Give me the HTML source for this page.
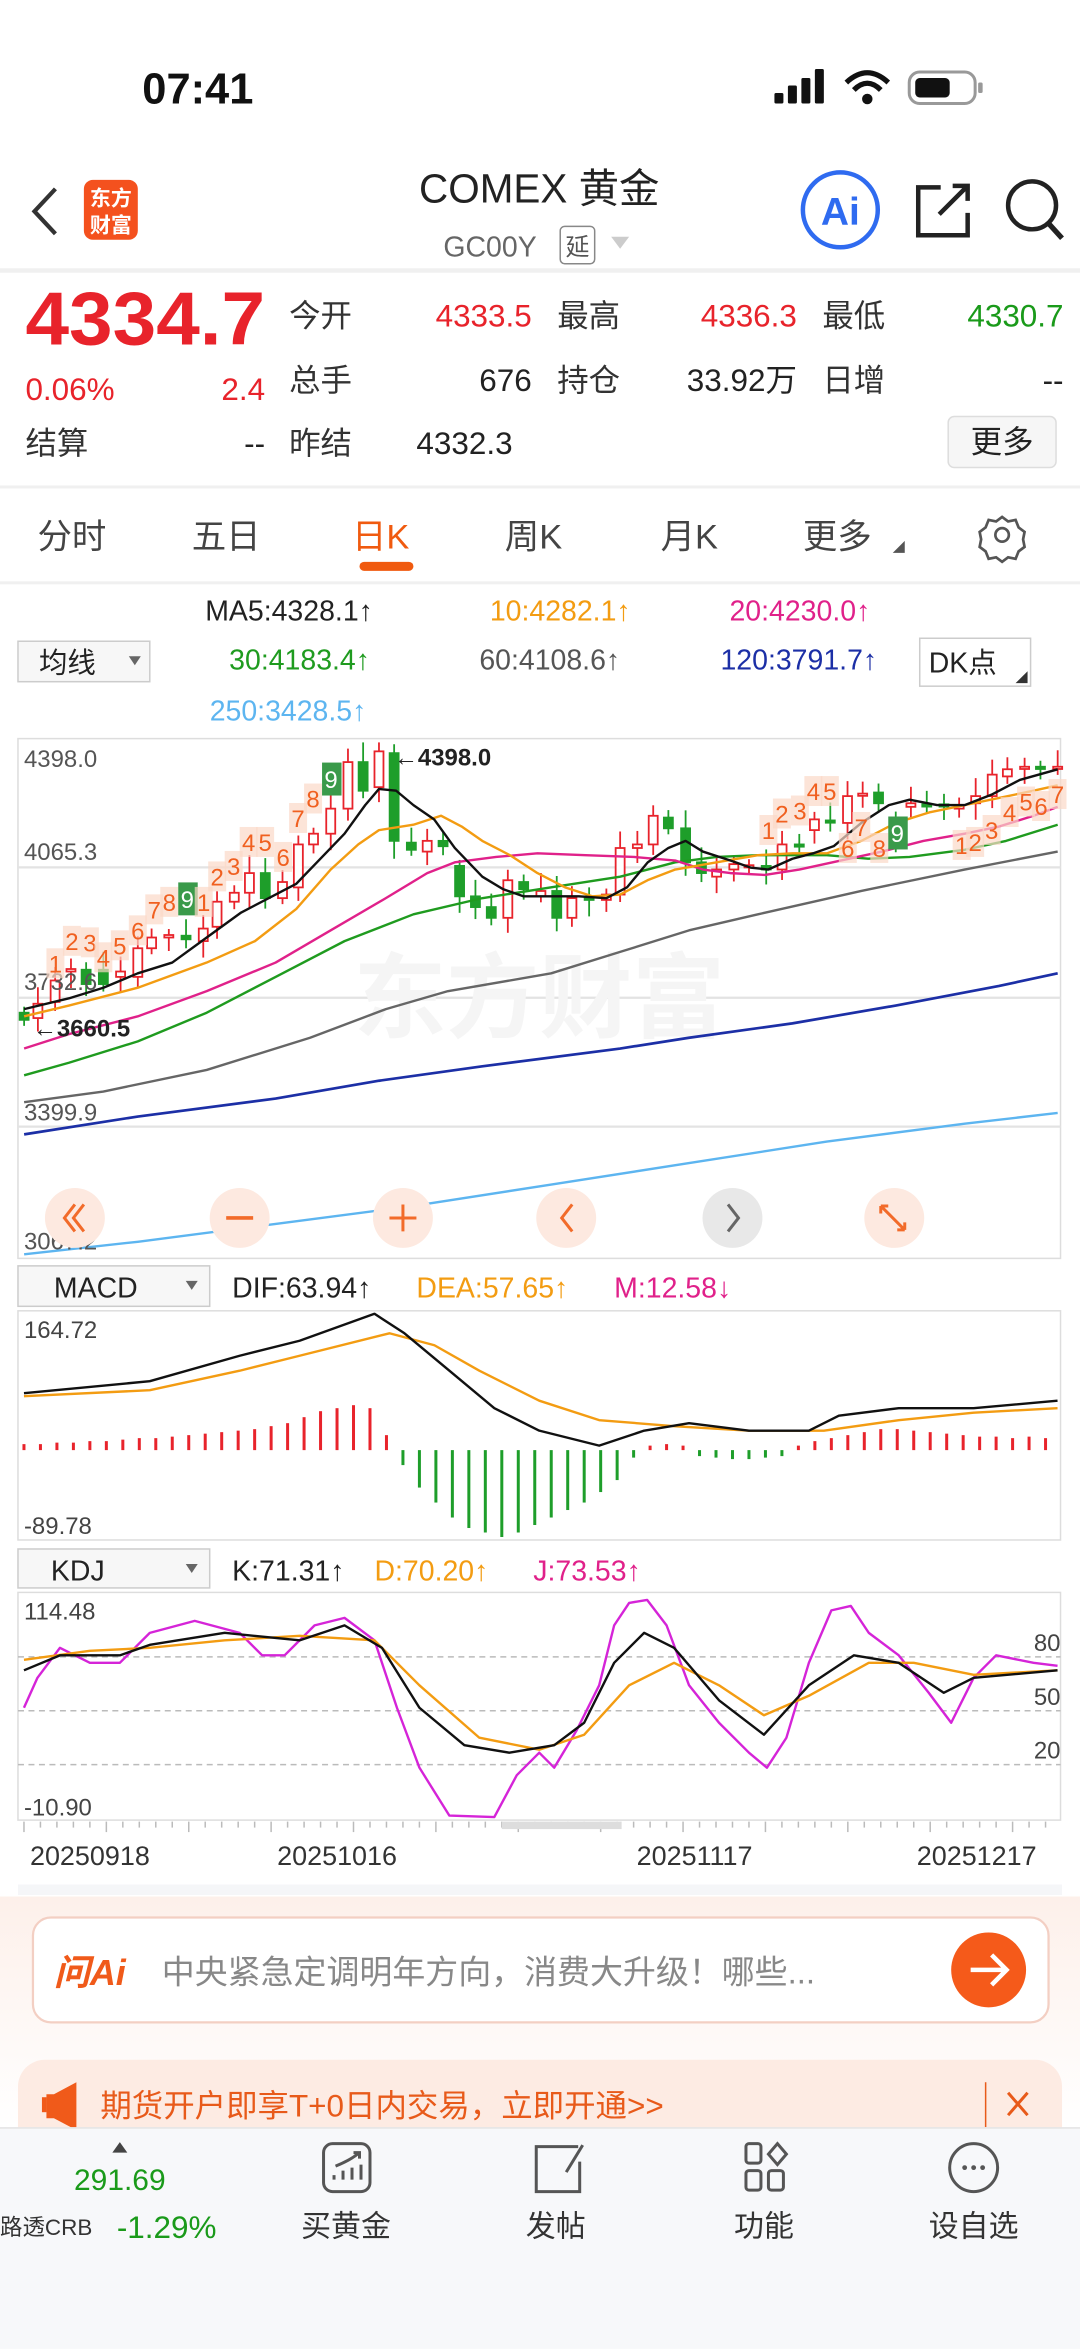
<!DOCTYPE html>
<html><head><meta charset="utf-8"><style>
html,body{margin:0;padding:0;background:#fff;}
svg{display:block;}
text{font-family:"Liberation Sans","Noto Sans CJK SC",sans-serif;}
</style></head><body>
<svg id="s" width="1080" height="2349" viewBox="0 0 721 1568" xmlns="http://www.w3.org/2000/svg">
<rect width="721" height="1568" fill="#fff"/>
<!-- status bar -->
<text x="95" y="69" font-size="29" font-weight="bold" fill="#111">07:41</text>
<rect x="517" y="62" width="6" height="7" rx="1" fill="#111"/><rect x="526" y="57" width="6" height="12" rx="1" fill="#111"/><rect x="535" y="52" width="6" height="17" rx="1" fill="#111"/><rect x="544" y="46" width="6" height="23" rx="1" fill="#111"/>
<path d="M565 55 Q579 42 593 55" stroke="#111" stroke-width="3.5" fill="none"/><path d="M570 60 Q579 51 588 60" stroke="#111" stroke-width="3.5" fill="none"/><circle cx="579" cy="66" r="3.5" fill="#111"/>
<rect x="607" y="48" width="44" height="21" rx="7" stroke="#999" stroke-width="2" fill="none"/><rect x="611" y="52" width="23" height="13" rx="3" fill="#111"/><rect x="653" y="55" width="3" height="7" rx="1" fill="#999"/>
<!-- header -->
<path d="M37 126 L23 141 L37 156" stroke="#333" stroke-width="2.8" fill="none"/>
<rect x="56" y="120" width="36" height="40" rx="6" fill="#f4511e"/>
<text x="74" y="137" font-size="14" font-weight="bold" fill="#fff" text-anchor="middle">东方</text>
<text x="74" y="155" font-size="14" font-weight="bold" fill="#fff" text-anchor="middle">财富</text>
<text x="360" y="135" font-size="27" fill="#222" text-anchor="middle">COMEX 黄金</text>
<text x="296" y="171" font-size="19" fill="#666">GC00Y</text>
<rect x="374" y="151" width="23" height="25" rx="3" stroke="#888" fill="none"/><text x="385.5" y="170" font-size="16" fill="#555" text-anchor="middle">延</text>
<path d="M408 158 L420 158 L414 166Z" fill="#ccc"/>
<circle cx="561" cy="140" r="25" stroke="#2f6bf0" stroke-width="3" fill="none"/>
<text x="561" y="150" font-size="26" font-weight="bold" fill="#2f6bf0" text-anchor="middle">Ai</text>
<path d="M628 125 L613 125 L613 157 L646 157 L646 142" stroke="#222" stroke-width="3" fill="none"/><path d="M627 143 L646 124 M636 124 L646 124 L646 134" stroke="#222" stroke-width="3" fill="none"/>
<circle cx="689" cy="137" r="16" stroke="#222" stroke-width="3" fill="none"/><path d="M700 149 L709 159" stroke="#222" stroke-width="3.5"/>
<rect x="0" y="179" width="721" height="3" fill="#f0f0f0"/>
<!-- quote -->
<text x="17" y="230" font-size="50" font-weight="bold" fill="#e8232b" textLength="160" lengthAdjust="spacingAndGlyphs">4334.7</text>
<g font-size="21">
<text x="193" y="218" fill="#333">今开</text><text x="355" y="218" fill="#e8232b" text-anchor="end">4333.5</text>
<text x="372" y="218" fill="#333">最高</text><text x="532" y="218" fill="#e8232b" text-anchor="end">4336.3</text>
<text x="549" y="218" fill="#333">最低</text><text x="710" y="218" fill="#1a9a1a" text-anchor="end">4330.7</text>
<text x="17" y="267" fill="#e8232b">0.06%</text><text x="177" y="267" fill="#e8232b" text-anchor="end">2.4</text>
<text x="193" y="261" fill="#333">总手</text><text x="355" y="261" fill="#222" text-anchor="end">676</text>
<text x="372" y="261" fill="#333">持仓</text><text x="532" y="261" fill="#222" text-anchor="end">33.92万</text>
<text x="549" y="261" fill="#333">日增</text><text x="710" y="261" fill="#222" text-anchor="end">--</text>
<text x="17" y="303" fill="#333">结算</text><text x="177" y="303" fill="#222" text-anchor="end">--</text>
<text x="193" y="303" fill="#333">昨结</text><text x="278" y="303" fill="#222">4332.3</text>
</g>
<rect x="633" y="278" width="72" height="34" rx="4" fill="#f6f6f6" stroke="#ddd"/>
<text x="669" y="302" font-size="21" fill="#222" text-anchor="middle">更多</text>
<rect x="0" y="324" width="721" height="2" fill="#f0f0f0"/>
<!-- tabs -->
<g font-size="23" fill="#444">
<text x="25" y="366">分时</text><text x="128" y="366">五日</text>
<text x="235" y="366" fill="#f05a0f">日K</text>
<text x="337" y="366">周K</text><text x="441" y="366">月K</text><text x="536" y="366">更多</text>
</g>
<path d="M596 369 L604 361 L604 369Z" fill="#555"/>
<path d="M669 345 l4 3 5 -1 2 5 4 3 -1 5 1 5 -4 3 -2 5 -5 -1 -4 3 -4 -3 -5 1 -2 -5 -4 -3 1 -5 -1 -5 4 -3 2 -5 5 1z" stroke="#555" stroke-width="1.8" fill="none"/>
<circle cx="669" cy="357" r="4.5" stroke="#555" stroke-width="1.8" fill="none"/>
<rect x="240" y="375" width="36" height="6" rx="3" fill="#f05a0f"/>
<rect x="0" y="388" width="721" height="2" fill="#f0f0f0"/>
<!-- MA legend -->
<g font-size="19">
<text x="137" y="414" fill="#222">MA5:4328.1↑</text><text x="327" y="414" fill="#f39c12">10:4282.1↑</text><text x="487" y="414" fill="#e0218a">20:4230.0↑</text>
<text x="153" y="447" fill="#1f9b1f">30:4183.4↑</text><text x="320" y="447" fill="#555">60:4108.6↑</text><text x="481" y="447" fill="#1c2fa6">120:3791.7↑</text>
<text x="140" y="481" fill="#5db5f0">250:3428.5↑</text>
</g>
<rect x="12" y="428" width="88" height="27" fill="#f7f7f7" stroke="#ccc"/><text x="26" y="449" font-size="19" fill="#222">均线</text><path d="M86 438 L94 438 L90 444Z" fill="#666"/>
<rect x="614" y="426" width="74" height="32" fill="#fff" stroke="#ccc"/><text x="620" y="449" font-size="19" fill="#222">DK点</text><path d="M686 448 L686 456 L678 456Z" fill="#333"/>
<!-- main chart -->
<rect x="12" y="493" width="696" height="347" fill="#fff" stroke="#ddd"/>
<path d="M12 579 H708 M12 666 H708 M12 752 H708" stroke="#e3e3e3" stroke-width="1.5"/>
<text x="360" y="688" font-size="62" font-weight="bold" fill="#f5f5f5" text-anchor="middle">东方财富</text>
<g id="main"></g>
<g font-size="16" fill="#555">
<text x="16" y="512">4398.0</text><text x="16" y="574">4065.3</text><text x="16" y="661">3732.6</text><text x="16" y="748">3399.9</text><text x="16" y="834">3067.2</text>
</g>
<text x="263" y="511" font-size="16" font-weight="bold" fill="#222">←4398.0</text>
<text x="22" y="692" font-size="16" font-weight="bold" fill="#222">←3660.5</text>
<g id="nums" font-size="16" fill="#f06020"></g>
<!-- controls -->
<g>
<circle cx="50" cy="813" r="20" fill="#fde9e0"/><circle cx="160" cy="813" r="20" fill="#fde9e0"/><circle cx="269" cy="813" r="20" fill="#fde9e0"/><circle cx="378" cy="813" r="20" fill="#fde9e0"/><circle cx="489" cy="813" r="20" fill="#e8e8e8"/><circle cx="597" cy="813" r="20" fill="#fde9e0"/>
<path d="M50 804 L43 813 L50 822 M56 804 L49 813 L56 822" stroke="#f26b2a" stroke-width="2" fill="none"/>
<path d="M151 813 H169" stroke="#f26b2a" stroke-width="2.5"/>
<path d="M260 813 H278 M269 804 V822" stroke="#f26b2a" stroke-width="2"/>
<path d="M382 804 L375 813 L382 822" stroke="#f26b2a" stroke-width="2" fill="none"/>
<path d="M486 804 L493 813 L486 822" stroke="#666" stroke-width="2" fill="none"/>
<path d="M588 805 L604 821 M588 805 h5 M588 805 v5 M604 821 h-5 M604 821 v-5" stroke="#f26b2a" stroke-width="2" fill="none"/>
</g>
<!-- MACD -->
<rect x="12" y="845" width="128" height="27" fill="#f7f7f7" stroke="#ccc"/><text x="36" y="866" font-size="19" fill="#222">MACD</text><path d="M124 855 L132 855 L128 861Z" fill="#666"/>
<g font-size="19"><text x="155" y="866" fill="#222">DIF:63.94↑</text><text x="278" y="866" fill="#f39c12">DEA:57.65↑</text><text x="410" y="866" fill="#e0218a">M:12.58↓</text></g>
<rect x="12" y="875" width="696" height="153" fill="#fff" stroke="#ddd"/>
<g id="macd"></g>
<text x="16" y="893" font-size="16" fill="#444">164.72</text><text x="16" y="1024" font-size="16" fill="#444">-89.78</text>
<!-- KDJ -->
<rect x="12" y="1034" width="128" height="26" fill="#f7f7f7" stroke="#ccc"/><text x="34" y="1055" font-size="19" fill="#222">KDJ</text><path d="M124 1044 L132 1044 L128 1050Z" fill="#666"/>
<g font-size="19"><text x="155" y="1055" fill="#222">K:71.31↑</text><text x="250" y="1055" fill="#f39c12">D:70.20↑</text><text x="356" y="1055" fill="#e0218a">J:73.53↑</text></g>
<rect x="12" y="1063" width="696" height="152" fill="#fff" stroke="#ddd"/>
<path d="M12 1106 H708 M12 1142 H708 M12 1178 H708" stroke="#bbb" stroke-dasharray="4 3"/>
<g id="kdj"></g>
<g font-size="16" fill="#444"><text x="16" y="1081">114.48</text><text x="16" y="1212">-10.90</text>
<text x="708" y="1102" text-anchor="end">80</text><text x="708" y="1138" text-anchor="end">50</text><text x="708" y="1174" text-anchor="end">20</text></g>
<g id="ticks"></g>
<rect x="335" y="1216" width="80" height="5" fill="#ddd"/>
<g font-size="18" fill="#333"><text x="20" y="1245">20250918</text><text x="185" y="1245">20251016</text><text x="425" y="1245">20251117</text><text x="612" y="1245">20251217</text></g>
<rect x="12" y="1258" width="697" height="7" fill="#f5f6f8"/>
<!-- AI area -->
<defs><linearGradient id="pg" x1="0" y1="0" x2="0" y2="1"><stop offset="0" stop-color="#fdf0ea"/><stop offset="1" stop-color="#fff"/></linearGradient></defs>
<rect x="0" y="1266" width="721" height="154" fill="url(#pg)"/>
<rect x="22" y="1280" width="678" height="70" rx="12" fill="#fff" stroke="#f3cfc3" stroke-width="1.5"/>
<text x="36" y="1325" font-size="24" font-weight="bold" font-style="italic" fill="#f05a1a">问Ai</text>
<text x="108" y="1324" font-size="22" fill="#888">中央紧急定调明年方向，消费大升级！哪些...</text>
<circle cx="660" cy="1315" r="25" fill="#f55a1a"/><path d="M648 1315 H671 M662 1305 L672 1315 L662 1325" stroke="#fff" stroke-width="3" fill="none"/>
<rect x="12" y="1375" width="697" height="70" rx="18" fill="#fdebe3"/>
<path d="M31 1398 h5 l15 -8 v32 l-15 -8 h-5z" fill="#f05a1a"/><rect x="28" y="1400" width="3" height="10" fill="#f05a1a"/>
<text x="67" y="1413" font-size="21" fill="#e85a1a">期货开户即享T+0日内交易，立即开通&gt;&gt;</text>
<path d="M658 1390 V1420" stroke="#e85a1a"/><path d="M673 1397 L686 1412 M686 1397 L673 1412" stroke="#e85a1a" stroke-width="2"/>
<!-- bottom bar -->
<rect x="0" y="1420" width="721" height="148" fill="#f7f8fa"/><rect x="0" y="1420" width="721" height="1" fill="#e3e3e3"/>
<path d="M75 1437 L80 1430 L85 1437Z" fill="#444"/>
<text x="80" y="1462" font-size="20" fill="#1a9a1a" text-anchor="middle">291.69</text>
<text x="0" y="1492" font-size="15" fill="#333">路透CRB</text><text x="78" y="1494" font-size="21" fill="#1a9a1a">-1.29%</text>
<g stroke="#555" stroke-width="2" fill="none">
<rect x="216" y="1431" width="31" height="32" rx="6"/><path d="M223 1455 v-3 M229 1455 v-6 M235 1455 v-8 M241 1455 v-10 M224 1446 Q234 1442 240 1437 M236 1437 h4 v4"/>
<path d="M386 1433 h-28 v30 h29 v-20" /><path d="M378 1450 L389 1432"/>
<rect x="498" y="1431" width="10" height="13" rx="2"/><path d="M519 1431 l6 7 -6 7 -6 -7z"/><rect x="498" y="1449" width="10" height="13" rx="2"/><rect x="513" y="1449" width="10" height="13" rx="2"/>
<circle cx="650" cy="1447" r="16"/>
</g>
<g fill="#555"><circle cx="644" cy="1447" r="1.6"/><circle cx="650" cy="1447" r="1.6"/><circle cx="656" cy="1447" r="1.6"/></g>
<g font-size="20" fill="#333" text-anchor="middle"><text x="231" y="1493">买黄金</text><text x="371" y="1493">发帖</text><text x="510" y="1493">功能</text><text x="650" y="1493">设自选</text></g>
</svg>
<script>
var NS="http://www.w3.org/2000/svg";
function el(p,t,a){var e=document.createElementNS(NS,t);for(var k in a)e.setAttribute(k,a[k]);p.appendChild(e);return e;}
var main=document.getElementById("main");
function zx(x){return x*0.46;} function zy(y){return 480+y*0.239;}
function line(g,pts,c,w,conv){var d="";pts.forEach(function(p,i){var x=conv?zx(p[0]):p[0],y=conv?zy(p[1]):p[1];d+=(i?"L":"M")+x.toFixed(1)+" "+y.toFixed(1);});el(g,"path",{d:d,stroke:c,"stroke-width":w,fill:"none","stroke-linejoin":"round"});}
var RED="#e8232b",GRN="#1e9e2a";
var C=[[35,820,840,0],[55,795,835,1],[80,730,790,1],[103,698,705,1],[125,700,740,0],[150,700,740,0],[175,705,720,1],[200,640,720,1],[220,610,640,1],[245,603,610,1],[270,605,615,0],[295,585,620,1],[315,510,580,1],[340,485,510,1],[362,430,485,1],[385,430,500,0],[410,455,500,1],[433,350,470,1],[455,320,350,1],[480,250,320,1],[505,120,250,1],[527,120,200,0],[550,90,190,1],[572,95,340,0],[597,345,365,0],[620,340,370,1],[643,340,355,0],[667,410,495,0],[690,495,525,0],[713,525,555,0],[737,450,555,1],[760,455,475,0],[785,480,495,1],[808,480,555,0],[830,500,555,1],[855,495,505,0],[880,490,505,1],[900,360,490,1],[925,350,360,1],[948,270,350,1],[970,275,305,0],[995,305,400,0],[1018,400,430,0],[1040,420,440,1],[1065,405,420,1],[1087,408,414,1],[1112,410,420,0],[1135,350,420,1],[1160,350,356,0],[1182,280,310,1],[1205,283,289,0],[1230,215,290,1],[1252,208,214,1],[1275,205,235,0],[1300,275,330,0],[1322,235,245,1],[1345,238,244,0],[1370,238,244,0],[1392,240,250,1],[1416,215,235,1],[1440,155,215,1],[1462,140,160,1],[1487,133,139,1],[1510,133,139,0],[1535,133,139,1]];
C.forEach(function(c,i){var col=c[3]?RED:GRN,x=zx(c[0]),t=zy(c[1]),b=zy(c[2]);var w1=t-(4+(i*7%9)),w2=b+(4+(i*5%8));if(c[0]==572){w1=zy(70);w2=zy(390);}if(c[0]==527||c[0]==550)w1=zy(65);
el(main,"path",{d:"M"+x+" "+w1+"V"+w2,stroke:col,"stroke-width":1.2});
var h=Math.max(b-t,1.5);el(main,"rect",{x:x-3,y:t,width:6,height:h,fill:c[3]?"#fff":col,stroke:col,"stroke-width":1.2});});
line(main,[[35,1495],[200,1460],[400,1410],[600,1360],[800,1300],[1000,1240],[1200,1180],[1400,1130],[1535,1100]],"#5db5f0",1.6,1);
line(main,[[35,1160],[200,1110],[400,1060],[550,1010],[700,970],[900,920],[1000,890],[1150,850],[1300,800],[1450,745],[1535,710]],"#1c2fa6",1.8,1);
line(main,[[35,1070],[150,1040],[300,980],[450,890],[560,810],[650,760],[800,710],[900,650],[1000,590],[1100,545],[1250,480],[1400,420],[1535,370]],"#666",1.6,1);
line(main,[[35,995],[100,960],[200,900],[300,820],[400,720],[500,620],[600,545],[700,500],[800,470],[900,440],[980,400],[1040,385],[1100,380],[1200,380],[1260,390],[1320,385],[1400,365],[1460,340],[1535,295]],"#1f9b1f",1.6,1);
line(main,[[35,920],[100,880],[200,830],[300,760],[400,680],[480,590],[560,500],[620,430],[660,400],[720,385],[780,375],[850,380],[920,385],[980,395],[1020,420],[1060,430],[1110,435],[1160,420],[1220,395],[1280,370],[1340,340],[1400,320],[1450,300],[1500,270],[1535,245]],"#e0218a",1.6,1);
line(main,[[35,830],[100,800],[200,750],[300,680],[370,620],[430,530],[480,420],[520,350],[550,310],[600,295],[640,270],[670,300],[700,340],[740,380],[780,430],[820,470],[860,495],[900,490],[940,450],[980,420],[1040,400],[1100,380],[1150,375],[1200,375],[1250,340],[1300,290],[1350,260],[1400,240],[1450,220],[1500,200],[1535,185]],"#f39c12",1.6,1);
line(main,[[35,810],[100,780],[150,750],[200,710],[250,680],[300,610],[350,540],[400,490],[430,460],[460,400],[500,320],[530,240],[550,195],[575,200],[600,240],[630,280],[660,360],[700,440],[730,475],[760,495],[800,495],[840,495],[880,500],[910,470],[940,400],[970,360],[995,340],[1020,370],[1060,395],[1090,415],[1115,420],[1150,390],[1180,375],[1210,355],[1250,290],[1290,240],[1320,225],[1360,240],[1400,240],[1440,210],[1480,170],[1535,140]],"#111",1.6,1);
var nums=document.getElementById("nums");
var N=[["1",37,643],["2",48,628],["3",60,629],["4",69,639],["5",80,631],["6",92,621],["7",103,607],["8",113,602],["9",125,600,1],["1",136,602],["2",145,585],["3",156,578],["4",166,562],["5",177,562],["6",189,572],["7",199,546],["8",209,533],["9",221,520,1],["1",513,554],["2",522,543],["3",534,541],["4",543,528],["5",554,528],["6",566,566],["7",575,552],["8",587,566],["9",599,556,1],["1",642,564],["2",651,562],["3",662,554],["4",674,542],["5",685,535],["6",695,538],["7",706,530]];
N.forEach(function(n){if(n[3]){el(nums,"rect",{x:n[1]-6,y:n[2]-11,width:13,height:22,fill:"#3a9a4a"});var t=el(nums,"text",{x:n[1],y:n[2]+6,"text-anchor":"middle",fill:"#fff"});t.textContent=n[0];}else{el(nums,"rect",{x:n[1]-6,y:n[2]-10,width:12,height:20,fill:"#fbd9c8",opacity:0.7});var t=el(nums,"text",{x:n[1],y:n[2]+6,"text-anchor":"middle"});t.textContent=n[0];}});
var macd=document.getElementById("macd");
var H=[4,4,5,5,6,6,7,8,8,9,10,11,12,13,14,16,18,22,26,28,30,28,10,-10,-25,-35,-45,-52,-55,-58,-55,-50,-45,-40,-35,-28,-20,-5,3,4,3,-4,-5,-6,-6,-5,-4,3,6,8,10,12,14,14,13,12,11,10,9,9,8,9,8];
H.forEach(function(h,i){var x=16+i*11;el(macd,"rect",{x:x-1,y:h>0?968-h:968,width:2,height:Math.abs(h),fill:h>0?RED:GRN});});
line(macd,[[16,932],[100,928],[160,915],[200,905],[260,890],[290,898],[320,915],[360,935],[400,948],[450,952],[500,955],[550,955],[600,948],[650,943],[706,940]],"#f39c12",1.6);
line(macd,[[16,930],[100,922],[160,905],[200,895],[250,877],[270,890],[300,915],[330,940],[360,955],[400,965],[430,955],[460,950],[500,955],[540,955],[560,945],[600,940],[650,940],[706,935]],"#111",1.6);
var kdj=document.getElementById("kdj");
line(kdj,[[16,1140],[25,1120],[40,1100],[60,1110],[80,1110],[100,1090],[130,1082],[160,1090],[175,1105],[190,1105],[210,1085],[230,1080],[250,1095],[265,1140],[280,1180],[300,1212],[330,1213],[345,1185],[360,1170],[370,1180],[385,1155],[400,1125],[410,1085],[420,1070],[432,1068],[445,1085],[460,1125],[480,1150],[500,1170],[512,1180],[525,1160],[540,1110],[555,1075],[568,1072],[580,1090],[600,1105],[620,1130],[635,1150],[650,1120],[665,1105],[690,1110],[706,1112]],"#d524d8",1.6);
line(kdj,[[16,1108],[60,1102],[100,1100],[150,1095],[200,1092],[250,1095],[280,1125],[320,1160],[360,1168],[390,1158],[420,1125],[450,1110],[480,1125],[510,1145],[540,1132],[580,1110],[610,1110],[650,1118],[706,1115]],"#f39c12",1.6);
line(kdj,[[16,1115],[40,1105],[80,1105],[100,1098],[150,1090],[200,1095],[230,1085],[255,1100],[280,1140],[310,1165],[340,1170],[370,1165],[390,1150],[410,1110],[430,1090],[450,1100],[480,1135],[510,1158],[540,1125],[570,1105],[600,1110],[630,1130],[650,1120],[706,1115]],"#111",1.6);
var tk=document.getElementById("ticks");
for(var i=0;i<63;i++){var x=16+i*11;el(tk,"path",{d:"M"+x+" 1216V"+(i%5==0?1223:1220),stroke:"#bbb","stroke-width":1});}
</script>
</body></html>
